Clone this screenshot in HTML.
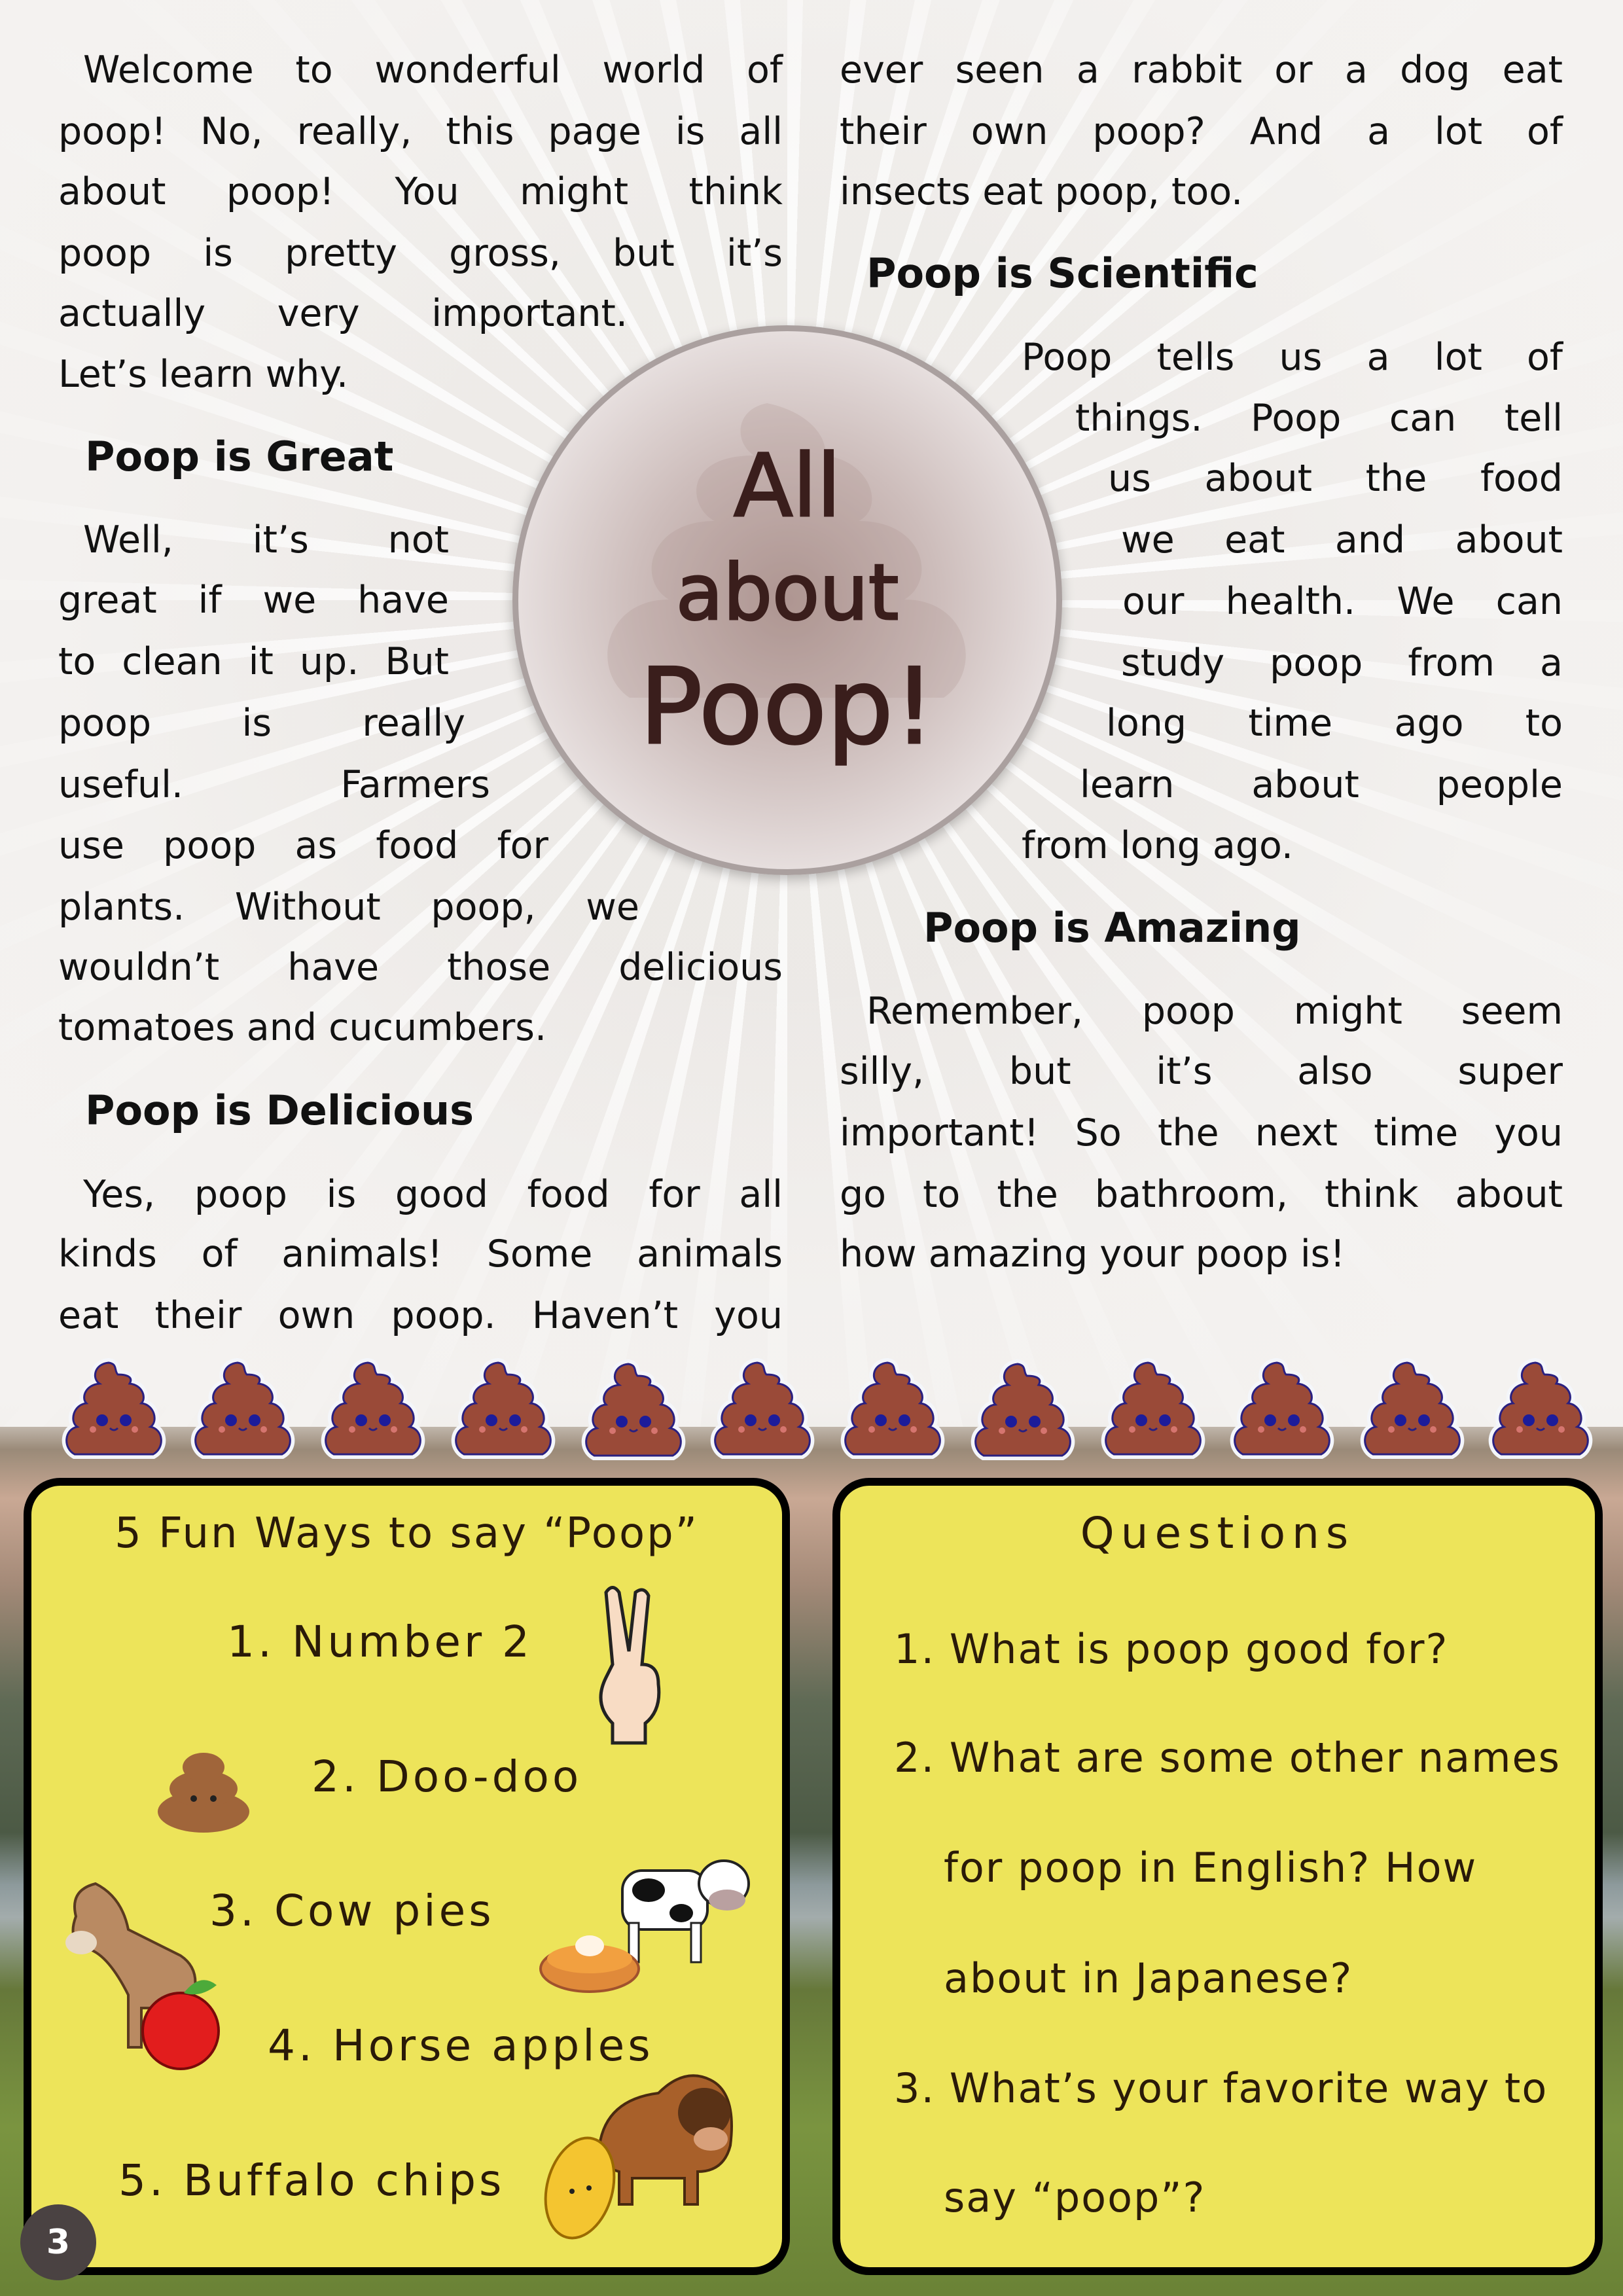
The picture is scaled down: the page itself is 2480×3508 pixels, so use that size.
<!DOCTYPE html>
<html><head><meta charset="utf-8"><style>
*{margin:0;padding:0;box-sizing:border-box}
body{width:2480px;height:3508px;position:relative;overflow:hidden;font-family:"DejaVu Sans","Liberation Sans",sans-serif;color:#111;
background:linear-gradient(180deg,#f4f2f0 0px,#efecea 1900px,#ece8e5 2140px,#9a8a78 2215px,#c9a894 2290px,#a48a78 2420px,#5f6a55 2600px,#4c5a45 2800px,#8d9a9c 2880px,#a3acac 2930px,#66783a 3040px,#7a9440 3250px,#6a8236 3508px)}
.rays{position:absolute;left:0;top:0;width:2480px;height:2180px;background:repeating-conic-gradient(from 0deg at 1203px 917px,rgba(255,255,255,.7) 0deg 1.5deg,rgba(230,226,222,.35) 1.5deg 6deg)}
.fade{position:absolute;left:0;top:0;width:2480px;height:2180px;background:radial-gradient(circle at 1203px 917px,rgba(0,0,0,0) 0,rgba(0,0,0,0) 600px,rgba(244,242,240,.85) 1100px,rgba(244,242,240,.97) 1500px)}
.l{position:absolute;font-size:57px;line-height:92px;height:92px;text-align:justify;text-align-last:justify;white-space:normal;overflow:visible}
.n{text-align:left;text-align-last:left}
.h{position:absolute;font-size:62px;line-height:92px;font-weight:bold}
.circle{position:absolute;left:783px;top:497px;width:840px;height:840px;border-radius:50%;border:9px solid #aaa09f;background:radial-gradient(circle at 50% 50%,#b09894 0,#cdbdbb 40%,#f2eeee 85%,#faf8f8 100%);box-shadow:0 6px 18px rgba(0,0,0,.25)}
.t{position:absolute;left:0;width:100%;text-align:center;color:#3a1e1c;font-family:"DejaVu Sans","Liberation Sans",sans-serif;-webkit-text-stroke:3px #3a1e1c}
.box{position:absolute;top:2258px;height:1218px;background:#ede45a;border:12px solid #000;border-radius:56px}
.bt{position:absolute;font-size:66px;letter-spacing:5px;color:#2a1a08;white-space:nowrap;line-height:80px}
.q{position:absolute;font-size:62px;letter-spacing:2px;color:#2a1a08;white-space:nowrap;line-height:80px}
</style></head><body>
<div class="rays"></div><div class="fade"></div>

<div class="l" style="top:61px;left:127px;width:1069px">Welcome to wonderful world of</div>
<div class="l" style="top:155px;left:89px;width:1107px">poop! No, really, this page is all</div>
<div class="l" style="top:247px;left:89px;width:1107px">about poop! You might think</div>
<div class="l" style="top:341px;left:89px;width:1107px">poop is pretty gross, but it’s</div>
<div class="l" style="top:433px;left:89px;width:870px">actually very important.</div>
<div class="l n" style="top:526px;left:89px;width:1107px">Let’s learn why.</div>
<div class="h" style="top:652px;left:130px">Poop is Great</div>
<div class="l" style="top:779px;left:127px;width:559px">Well, it’s not</div>
<div class="l" style="top:871px;left:89px;width:597px">great if we have</div>
<div class="l" style="top:965px;left:89px;width:597px">to clean it up. But</div>
<div class="l" style="top:1059px;left:89px;width:622px">poop is really</div>
<div class="l" style="top:1153px;left:89px;width:660px">useful. Farmers</div>
<div class="l" style="top:1246px;left:89px;width:749px">use poop as food for</div>
<div class="l" style="top:1340px;left:89px;width:888px">plants. Without poop, we</div>
<div class="l" style="top:1432px;left:89px;width:1107px">wouldn’t have those delicious</div>
<div class="l n" style="top:1524px;left:89px;width:1107px">tomatoes and cucumbers.</div>
<div class="h" style="top:1651px;left:130px">Poop is Delicious</div>
<div class="l" style="top:1779px;left:127px;width:1069px">Yes, poop is good food for all</div>
<div class="l" style="top:1870px;left:89px;width:1107px">kinds of animals! Some animals</div>
<div class="l" style="top:1964px;left:89px;width:1107px">eat their own poop. Haven’t you</div>

<div class="l" style="top:61px;left:1283px;width:1105px">ever seen a rabbit or a dog eat</div>
<div class="l" style="top:155px;left:1283px;width:1105px">their own poop? And a lot of</div>
<div class="l n" style="top:247px;left:1283px;width:1105px">insects eat poop, too.</div>
<div class="h" style="top:372px;left:1324px">Poop is Scientific</div>
<div class="l" style="top:500px;left:1561px;width:827px">Poop tells us a lot of</div>
<div class="l" style="top:593px;left:1643px;width:745px">things. Poop can tell</div>
<div class="l" style="top:685px;left:1693px;width:695px">us about the food</div>
<div class="l" style="top:779px;left:1713px;width:675px">we eat and about</div>
<div class="l" style="top:873px;left:1715px;width:673px">our health. We can</div>
<div class="l" style="top:967px;left:1713px;width:675px">study poop from a</div>
<div class="l" style="top:1059px;left:1690px;width:698px">long time ago to</div>
<div class="l" style="top:1153px;left:1650px;width:738px">learn about people</div>
<div class="l n" style="top:1246px;left:1561px;width:827px">from long ago.</div>
<div class="h" style="top:1372px;left:1411px">Poop is Amazing</div>
<div class="l" style="top:1499px;left:1324px;width:1064px">Remember, poop might seem</div>
<div class="l" style="top:1591px;left:1283px;width:1105px">silly, but it’s also super</div>
<div class="l" style="top:1685px;left:1283px;width:1105px">important! So the next time you</div>
<div class="l" style="top:1779px;left:1283px;width:1105px">go to the bathroom, think about</div>
<div class="l n" style="top:1870px;left:1283px;width:1105px">how amazing your poop is!</div>

<div class="circle">
<svg style="position:absolute;left:0;top:0" width="822" height="822" viewBox="0 0 822 822"><g fill="#a88c88" opacity=".22"><path d="M380 110 C330 120 330 170 360 190 C250 190 260 270 300 290 C200 290 180 380 230 410 C130 410 110 520 170 560 L650 560 C710 520 690 410 590 410 C640 380 620 290 520 290 C560 270 540 200 470 190 C470 150 430 120 380 110Z"/></g></svg>
<div class="t" style="top:160px;font-size:132px">All</div>
<div class="t" style="top:330px;font-size:118px">about</div>
<div class="t" style="top:480px;font-size:160px">Poop!</div>
</div>

<svg width="2480" height="200" style="position:absolute;left:0;top:2060px">
<defs><g id="p">
<path d="M-8 -68 C-30 -66 -34 -44 -22 -36 C-44 -34 -50 -14 -42 -6 C-62 -4 -68 22 -56 30 C-76 34 -78 62 -60 72 L60 72 C78 62 76 34 56 30 C68 22 62 -4 42 -6 C50 -14 44 -34 24 -36 C30 -46 20 -50 6 -50 C0 -56 6 -66 -8 -68Z" fill="#9a4a38" stroke="#f4f6fa" stroke-width="14" paint-order="stroke"/>
<path d="M-8 -68 C-30 -66 -34 -44 -22 -36 C-44 -34 -50 -14 -42 -6 C-62 -4 -68 22 -56 30 C-76 34 -78 62 -60 72 L60 72 C78 62 76 34 56 30 C68 22 62 -4 42 -6 C50 -14 44 -34 24 -36 C30 -46 20 -50 6 -50 C0 -56 6 -66 -8 -68Z" fill="none" stroke="#2a2080" stroke-width="3"/>
<circle cx="-18" cy="20" r="9" fill="#1c1c9a"/><circle cx="18" cy="20" r="9" fill="#1c1c9a"/>
<path d="M-6 32 Q0 38 6 32" stroke="#2a2080" stroke-width="3" fill="none"/>
<circle cx="-32" cy="34" r="5" fill="#e88" opacity=".7"/><circle cx="32" cy="34" r="5" fill="#e88" opacity=".7"/>
</g></defs>
<use href="#p" x="174" y="90"/><use href="#p" x="371" y="90"/><use href="#p" x="570" y="90"/><use href="#p" x="769" y="90"/><use href="#p" x="968" y="92"/><use href="#p" x="1165" y="90"/><use href="#p" x="1364" y="90"/><use href="#p" x="1563" y="92"/><use href="#p" x="1762" y="90"/><use href="#p" x="1959" y="90"/><use href="#p" x="2158" y="90"/><use href="#p" x="2354" y="90"/>
</svg>

<div class="box" style="left:36px;width:1171px"></div>
<div class="box" style="left:1272px;width:1177px"></div>

<div class="bt" style="top:2303px;left:36px;width:1171px;text-align:center;letter-spacing:3px;font-size:64px">5 Fun Ways to say “Poop”</div>
<div class="bt" style="top:2469px;left:347px">1. Number 2</div>
<div class="bt" style="top:2675px;left:476px">2. Doo-doo</div>
<div class="bt" style="top:2880px;left:320px">3. Cow pies</div>
<div class="bt" style="top:3086px;left:409px">4. Horse apples</div>
<div class="bt" style="top:3292px;left:181px">5. Buffalo chips</div>

<svg width="1171" height="1218" style="position:absolute;left:36px;top:2258px">
<g transform="translate(930,325)"><path d="M-30 -40 L-40 -150 Q-30 -165 -20 -150 L-5 -60 L5 -150 Q18 -160 25 -145 L15 -40 Q40 -40 40 -10 Q45 30 20 50 L20 80 L-30 80 L-30 50 Q-60 20 -40 -20 Z" fill="#f8dcc4" stroke="#222" stroke-width="5"/></g>
<g transform="translate(275,470)" fill="#a0653a"><ellipse cx="0" cy="40" rx="70" ry="32"/><ellipse cx="0" cy="5" rx="52" ry="28"/><ellipse cx="0" cy="-28" rx="32" ry="22"/><circle cx="-15" cy="20" r="5" fill="#222"/><circle cx="15" cy="20" r="5" fill="#222"/></g>
<g transform="translate(995,640)"><rect x="-80" y="-40" width="130" height="90" rx="30" fill="#fff" stroke="#222" stroke-width="4"/><ellipse cx="-40" cy="-10" rx="25" ry="18" fill="#111"/><ellipse cx="10" cy="25" rx="18" ry="14" fill="#111"/><rect x="-70" y="40" width="15" height="60" fill="#fff" stroke="#222" stroke-width="3"/><rect x="25" y="40" width="15" height="60" fill="#fff" stroke="#222" stroke-width="3"/><ellipse cx="75" cy="-20" rx="38" ry="35" fill="#fff" stroke="#222" stroke-width="4"/><ellipse cx="80" cy="5" rx="28" ry="16" fill="#b9a0a0"/></g>
<g transform="translate(865,740)"><ellipse cx="0" cy="10" rx="75" ry="35" fill="#e08a3a" stroke="#a0522d" stroke-width="4"/><ellipse cx="0" cy="-5" rx="65" ry="22" fill="#f2a040"/><ellipse cx="0" cy="-25" rx="22" ry="16" fill="#fff4e6"/></g>
<g transform="translate(150,730)"><path d="M-70 -60 Q-80 -100 -40 -110 Q0 -90 10 -40 L90 0 Q120 20 110 60 L110 140 L95 140 L95 80 L30 80 L30 140 L10 140 L10 60 Q-20 0 -50 -10 Q-85 -20 -70 -60Z" fill="#b98a62" stroke="#5a3a20" stroke-width="4"/><ellipse cx="-62" cy="-20" rx="24" ry="18" fill="#e8d8c4"/></g>
<g transform="translate(240,845)"><circle cx="0" cy="0" r="58" fill="#e21d1d" stroke="#7a0a0a" stroke-width="4"/><path d="M5 -58 Q30 -90 55 -70 Q30 -50 5 -58Z" fill="#4caa3a"/></g>
<g transform="translate(990,1000)"><path d="M-110 20 Q-100 -50 -20 -60 Q20 -100 60 -80 Q100 -60 90 20 Q80 60 40 60 L40 110 L20 110 L20 70 L-60 70 L-60 110 L-80 110 L-80 60 Q-115 50 -110 20Z" fill="#a8602a" stroke="#4a2a10" stroke-width="4"/><ellipse cx="50" cy="-30" rx="40" ry="38" fill="#5a3216"/><ellipse cx="60" cy="10" rx="26" ry="18" fill="#d8a07a"/></g>
<g transform="translate(850,1085)"><ellipse cx="0" cy="0" rx="50" ry="78" fill="#f4c530" stroke="#9a6a00" stroke-width="4" transform="rotate(15)"/><circle cx="-12" cy="5" r="4" fill="#222"/><circle cx="14" cy="0" r="4" fill="#222"/></g>
</svg>

<div class="bt" style="top:2303px;left:1272px;width:1177px;text-align:center;letter-spacing:10px">Questions</div>
<div class="q" style="top:2480px;left:1366px">1. What is poop good for?</div>
<div class="q" style="top:2646px;left:1366px">2. What are some other names</div>
<div class="q" style="top:2814px;left:1442px">for poop in English? How</div>
<div class="q" style="top:2983px;left:1442px">about in Japanese?</div>
<div class="q" style="top:3151px;left:1366px">3. What’s your favorite way to</div>
<div class="q" style="top:3318px;left:1442px">say “poop”?</div>

<div style="position:absolute;left:31px;top:3368px;width:116px;height:116px;border-radius:50%;background:#4a4242;color:#fff;font-weight:bold;font-size:52px;line-height:116px;text-align:center">3</div>
</body></html>
